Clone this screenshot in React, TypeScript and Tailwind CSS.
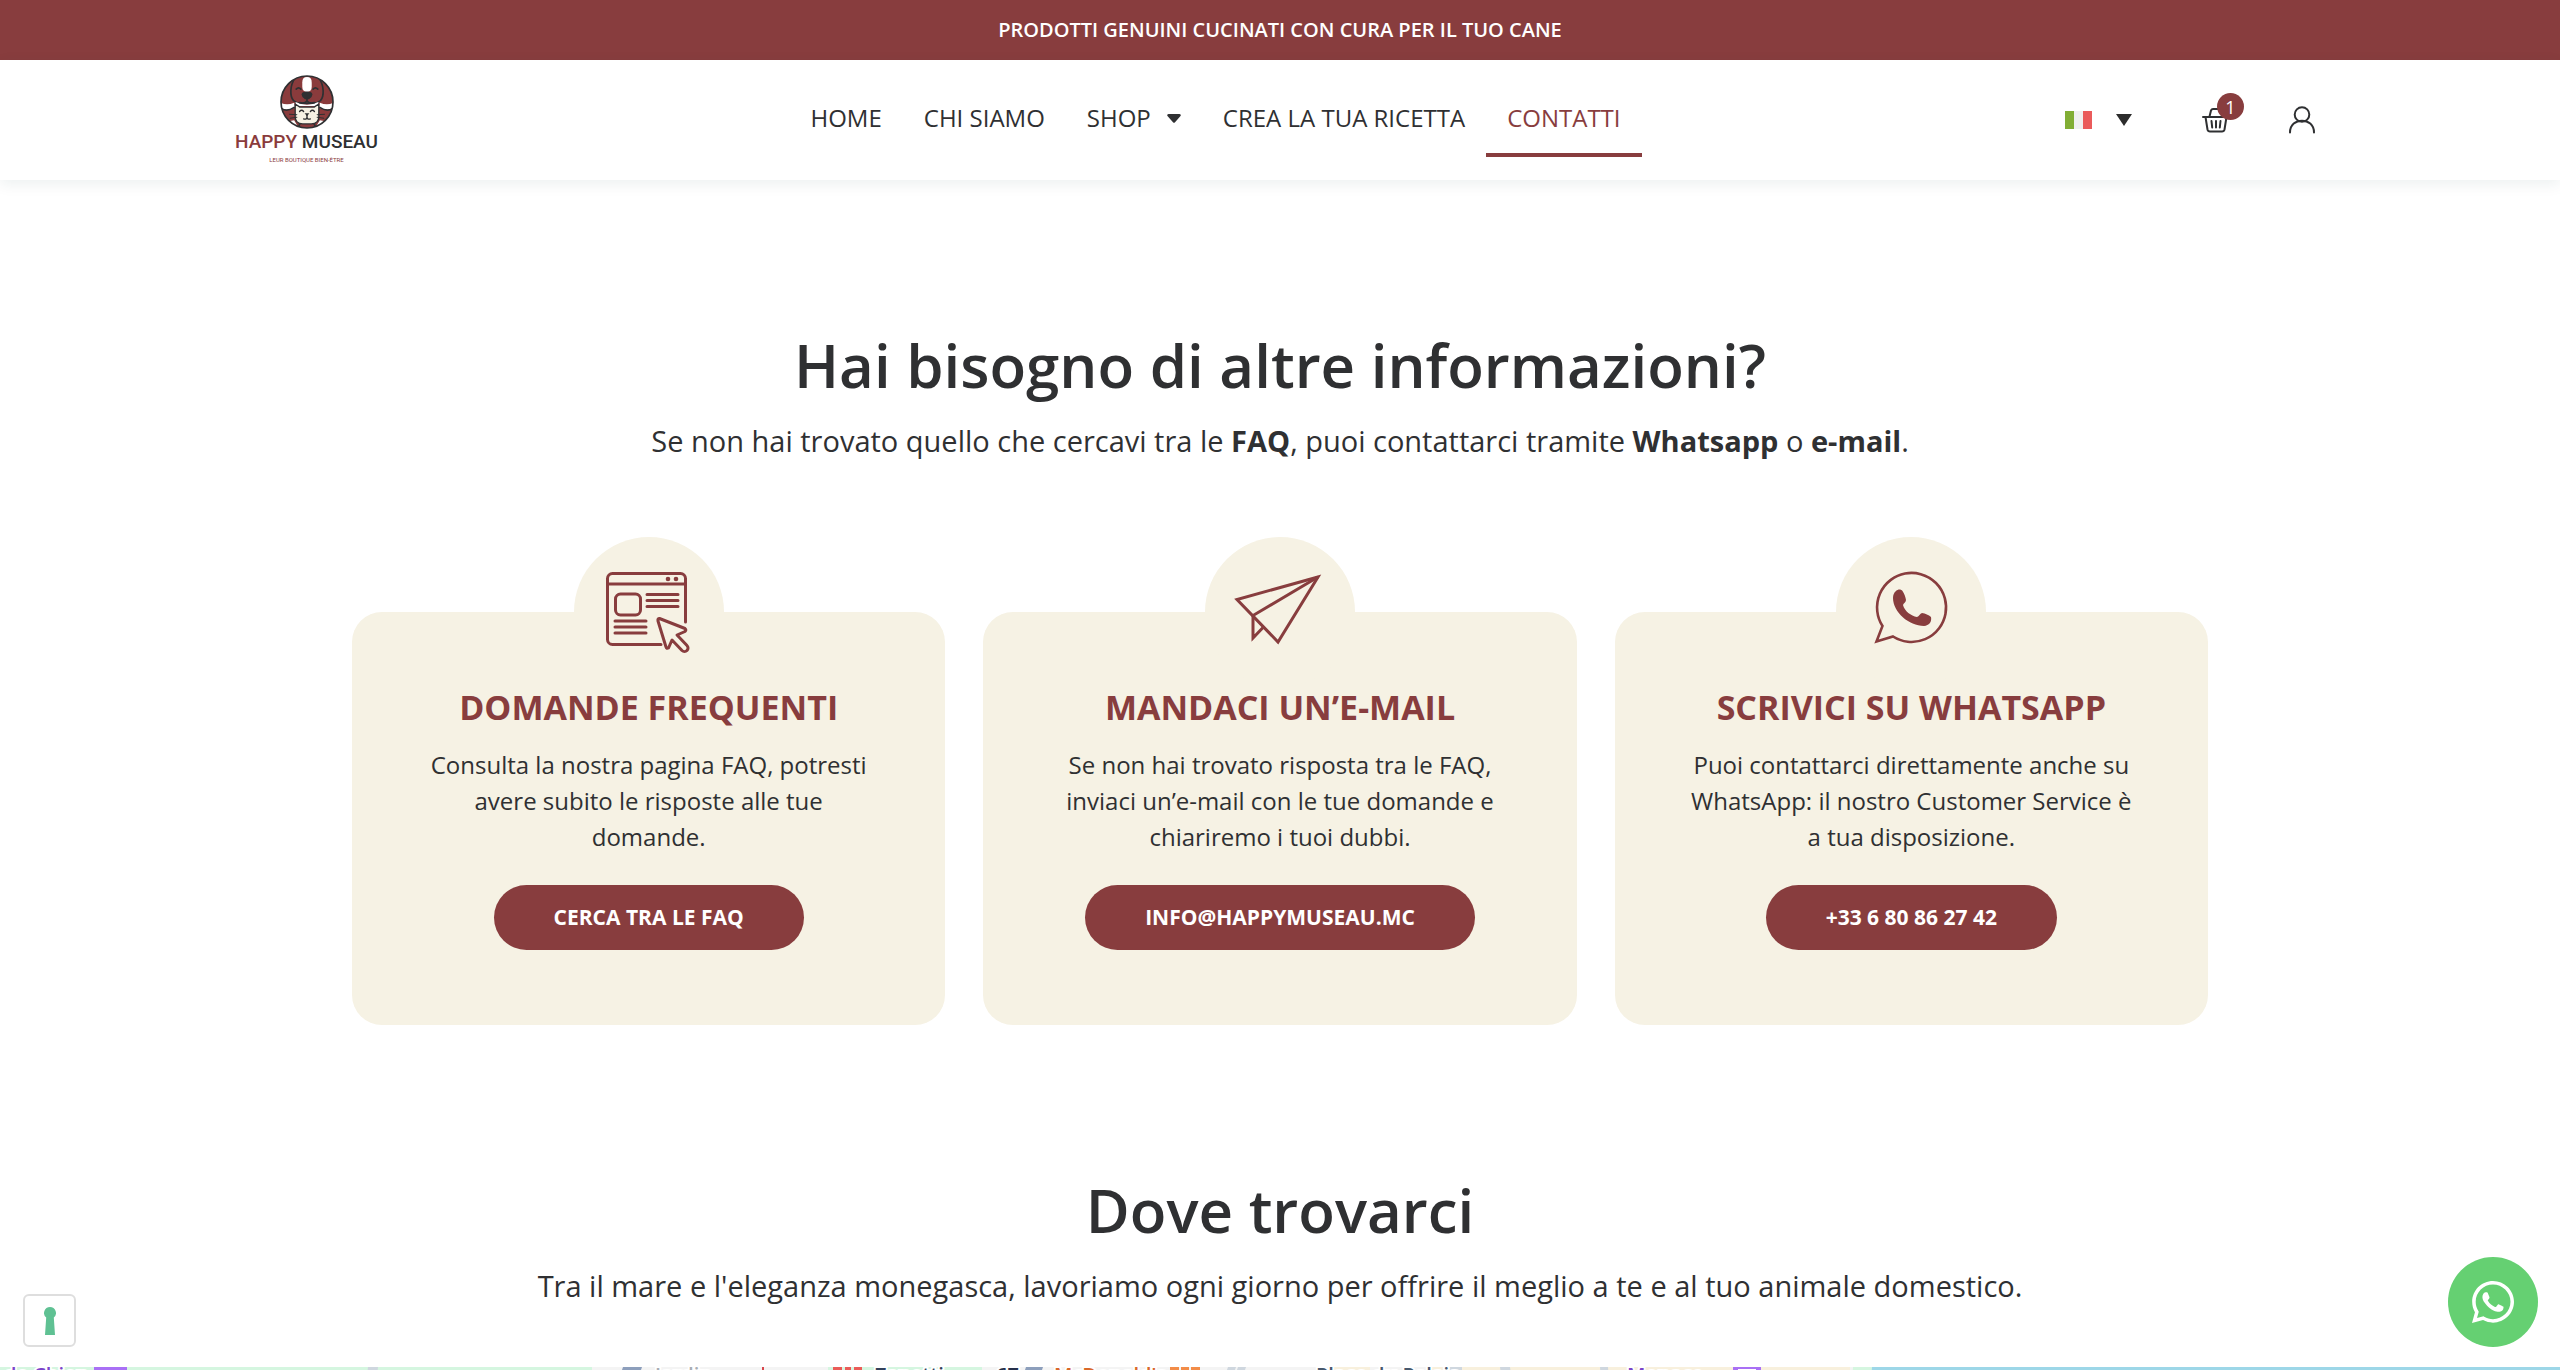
import React from "react";
import { FaWhatsapp } from "react-icons/fa";

const navItems = [
  { label: "HOME", href: "#home" },
  { label: "CHI SIAMO", href: "#chi-siamo" },
  { label: "SHOP", href: "#shop", hasMenu: true },
  { label: "CREA LA TUA RICETTA", href: "#ricetta" },
  { label: "CONTATTI", href: "#contatti", active: true },
];

const LogoMark = () => (
  <svg viewBox="0 0 160 160" className="size-[54px]" aria-hidden="true">
    <defs>
      <clipPath id="mark">
        <circle cx="80" cy="80" r="77" />
      </clipPath>
    </defs>
    <circle cx="80" cy="80" r="77" fill="#8a3b3c" />
    <g clipPath="url(#mark)" stroke="#2f3032" strokeWidth="5" strokeLinecap="round" strokeLinejoin="round">
      <path d="M-2 80q20 12 44 2l2 14q-14 10-30 6q-10-3-18-16z" fill="#fff" stroke="none" />
      <path d="M162 80q-20 12-44 2l-2 14q14 10 30 6q10-3 18-16z" fill="#fff" stroke="none" />
      <path d="M4 100q18 10 38-4M156 100q-18 10-38-4" fill="none" />
      <path d="M22 138l20-4 14 24-22 4zM138 138l-20-4-14 24 22 4z" fill="#fff" stroke="none" />
      <path d="M60 142h40l8 20H52z" fill="#8a3b3c" />
      <path d="M44 10C30 30 28 62 40 76q12 10 26 8h28q14 2 26-8c12-14 10-46-4-66" fill="#8a3b3c" />
      <path d="M46 80q34 16 68 0l-2 12H48z" fill="#fff" stroke="none" />
      <path d="M66 22q0-16 14-16t14 16v12q0 16-14 16T66 34z" fill="#fff" stroke="none" />
      <path d="M48 42q7-8 14 0M98 42q7-8 14 0" fill="none" />
      <path d="M64 58q0-9 16-9t16 9q0 8-10 14h-12q-10-6-10-14z" fill="#2f3032" stroke="none" />
      <path d="M80 70v8M58 82q16 4 22-5q6 9 22 5" fill="none" />
      <path d="M45 86l14 9h42l14-9v38q0 20-22 21H67q-22-1-22-21z" fill="#f6f2e4" strokeWidth="4" />
      <path d="M58 108q6-7 12 0M90 108q6-7 12 0M80 118v8M70 130q8 3 10-4q2 7 10 4" fill="none" strokeWidth="4" />
      <path d="M73 113h14l-7 9z" fill="#2f3032" stroke="none" />
      <path d="M28 116l22 2M30 128l20-3M132 116l-22 2M130 128l-20-3" fill="none" strokeWidth="3" />
    </g>
    <circle cx="80" cy="80" r="77" fill="none" stroke="#2f3032" strokeWidth="5" />
  </svg>
);

const BrowserIcon = () => (
  <svg viewBox="1 0 84 80" className="h-20 w-[84px] overflow-visible" fill="none" stroke="currentColor" strokeWidth="3" strokeLinecap="round" strokeLinejoin="round">
    <path d="M79.500 50V6.500a5 5 0 0 0-5-5h-68a5 5 0 0 0-5 5v61a5 5 0 0 0 5 5H55" />
    <path d="M1.500 12h78" />
    <g fill="currentColor" stroke="none">
      <circle cx="62" cy="7" r="2.300" />
      <circle cx="70" cy="7" r="2.300" />
    </g>
    <rect x="9.500" y="22" width="25" height="21" rx="5" />
    <path d="M41 22.500h31M41 28.500h31M41 34.500h31M9 49h31M9 55h31M9 61h31" />
    <path d="M53.500 46.500l25.500 10q1.500 1.500 0 3l-8 3.500 10 10.500a3.500 3.500 0 0 1-5 5l-10-10.500-3.500 8q-2 1-2.500-1l-8-26q-.5-2.500 1.500-2.500z" />
  </svg>
);

const PlaneIcon = () => (
  <svg viewBox="3 1 84 80" className="h-20 w-[84px] overflow-visible" fill="none" stroke="currentColor" strokeWidth="3" strokeLinejoin="miter">
    <path d="M83 6L2 28.500 43 71z" />
    <path d="M83 6L18 44.500V67l11-11.500" />
  </svg>
);

const ChatIcon = () => (
  <svg viewBox="-5 1 84 80" className="h-20 w-[84px] overflow-visible">
    <path d="M8.500 55A34.500 34.500 0 1 1 19 65.500L2.500 70.500z" fill="none" stroke="currentColor" strokeWidth="2.600" />
    <path
      d="M22 20c2-2 5-2 6.500 0 2 3 3 6 3.500 9 0 2-2.500 3.500-3 5 1.500 6 8 11 14 12 2-.5 3-3.500 5-4 3.500.5 6.500 2 9 4 1 5-2 8.500-7 9-15 0-31-14-31-28 0-3 1-5.500 3-7z"
      fill="currentColor"
    />
  </svg>
);

const cards = [
  {
    icon: <BrowserIcon />,
    title: "DOMANDE FREQUENTI",
    text: "Consulta la nostra pagina FAQ, potresti avere subito le risposte alle tue domande.",
    action: "CERCA TRA LE FAQ",
    href: "#faq",
  },
  {
    icon: <PlaneIcon />,
    title: "MANDACI UN’E-MAIL",
    text: "Se non hai trovato risposta tra le FAQ, inviaci un’e-mail con le tue domande e chiariremo i tuoi dubbi.",
    action: "INFO@HAPPYMUSEAU.MC",
    href: "mailto:info@happymuseau.mc",
  },
  {
    icon: <ChatIcon />,
    title: "SCRIVICI SU WHATSAPP",
    text: "Puoi contattarci direttamente anche su WhatsApp: il nostro Customer Service è a tua disposizione.",
    action: "+33 6 80 86 27 42",
    href: "tel:+33680862742",
  },
];

const Header = () => (
  <header className="flex h-[120px] items-center justify-between bg-white pl-[235px] pr-[244px] shadow-[0_4px_14px_rgba(0,60,60,0.08)]">
    <a href="#home" className="flex flex-col items-center font-[Roboto,sans-serif]">
      <LogoMark />
      <span className="text-[19px] leading-[26px] font-medium text-[#2f3032]">
        <span className="text-[#8a3b3c]">HAPPY</span> MUSEAU
      </span>
      <span className="text-[6px] leading-[10px] text-[#8a3b3c]">LEUR BOUTIQUE BIEN-ÊTRE</span>
    </a>

    <nav className="mr-3 flex text-[24px] leading-[30px]">
      {navItems.map((item) => (
        <a
          key={item.label}
          href={item.href}
          className={
            item.active
              ? "flex items-center border-b-4 border-[#883d3e] px-[21px] py-5 text-[#883d3e]"
              : "flex items-center border-b-4 border-transparent px-[21px] py-5"
          }
        >
          {item.label}
          {item.hasMenu && (
            <svg viewBox="0 0 14 9" className="ml-4 h-[9px] w-[14px]" fill="currentColor">
              <path d="M1.500 0h11q2 .5 1 2L8 8.300q-1 1-2 0L.5 2q-1-1.500 1-2z" />
            </svg>
          )}
        </a>
      ))}
    </nav>

    <div className="flex items-center">
      <label className="relative flex items-center gap-6">
        <svg viewBox="0 0 27 18" className="h-[18px] w-[27px]">
          <path d="M0 0h9v18H0z" fill="#82ae35" />
          <path d="M9 0h9v18H9z" fill="#f0f0f0" />
          <path d="M18 0h9v18h-9z" fill="#ea5b5b" />
        </svg>
        <svg viewBox="0 0 16 12" className="h-3 w-4" fill="#2c2c2c">
          <path d="M0 0h16L8 12z" />
        </svg>
        <select aria-label="Lingua" className="absolute inset-0 w-full opacity-0">
          <option>IT</option>
          <option>FR</option>
          <option>EN</option>
        </select>
      </label>
      <button aria-label="Carrello" className="relative ml-[70px]">
        <svg viewBox="0 0 28 28" className="size-7" fill="none" stroke="#2f3032" strokeWidth="2" strokeLinecap="round" strokeLinejoin="round">
          <path d="M1 11h26M3.500 11l2 12.500q.5 2 2.500 2h12q2 0 2.500-2l2-12.500M7.500 10.500l1.500-6q.7-1.500 2-1.500h6q1.300 0 2 1.500l1.500 6M9.500 15l.7 6.500M14 15v6.500M18.500 15l-.7 6.500" />
        </svg>
        <span className="absolute -top-[13px] left-[15px] flex size-[27px] items-center justify-center rounded-full bg-[#883d3e] text-[18px] leading-none text-white">
          1
        </span>
      </button>
      <button aria-label="Account" className="ml-[58px]">
        <svg viewBox="0 0 28 28" className="size-7" fill="none" stroke="#2f3032" strokeWidth="2" strokeLinecap="round">
          <circle cx="14" cy="8.500" r="7.300" />
          <path d="M2 26.500C2 10.700 26 10.700 26 26.500" />
        </svg>
      </button>
    </div>
  </header>
);

const CityMap = () => (
  <svg className="h-[600px] w-full" preserveAspectRatio="xMinYMin slice" viewBox="0 0 2560 600" fontWeight="600" fontSize="20">
    <path d="M0 0h2560v600H0z" fill="#f4f4f4" />
    <path d="M0 0h592v600H0zM828 0h154v600H828z" fill="#d5f6e0" />
    <path d="M1333 0h37v600h-37zM1430 0h420v600h-420z" fill="#f8f0dd" />
    <path d="M1853 0h707v600H1820z" fill="#d5f6e0" />
    <path d="M1872 0h688v600H1840z" fill="#9dd7e8" />
    <path d="M368 0h10l-60 600h-10zM1228 0h8L1036 600h-8zM1238 0h8l-200 600h-8zM1450 0h12v600h-12zM1500 0h10l80 600h-10zM1600 0h8l40 600h-8z" fill="#cfd7df" />
    <path d="M623 0h19L442 600h-19zM1026 0h17L843 600h-17z" fill="#8d9fbc" />
    <path d="M762 0h2v600h-2z" fill="#d8474c" />
    <g stroke="#fff" strokeWidth="4" paintOrder="stroke">
      <text x="4" y="15" fill="#7b45c9">de Chien</text>
      <text x="655" y="15" fill="#a9adb3">Jardin</text>
      <text x="875" y="15" fill="#33415a">Zanetti</text>
      <text x="996" y="15" fill="#26304a">67</text>
      <text x="1054" y="15" fill="#d9682a">McDonald's</text>
      <text x="1316" y="15" fill="#47586d">Place du Palais</text>
      <text x="1627" y="15" fill="#7b45c9">Monaco</text>
    </g>
    <path d="M94 0h33v28H94zM1733 0h28v28h-28z" fill="#a970f5" />
    <path d="M102 3h8v2h-8zM114 3h6v2h-6zM1738 2h18v2h-18z" fill="#fff" />
    <path d="M833 0h9v28h-9zM845 0h6v28h-6zM854 0h8v28h-8z" fill="#ea5c58" />
    <path d="M1170 0h9v28h-9zM1181 0h8v28h-8zM1191 0h9v28h-9z" fill="#f28c48" />
  </svg>
);

export default function App() {
  return (
    <div className="bg-white font-['Open_Sans',sans-serif] text-[#2f3032]">
      <div className="flex h-[60px] items-center justify-center bg-[#883d3e] text-[20px] font-semibold text-white">
        PRODOTTI GENUINI CUCINATI CON CURA PER IL TUO CANE
      </div>
      <Header />

      <main className="text-center">
        <section className="px-[352px] pt-[147px]">
          <h1 className="text-[60px] leading-[76px] font-semibold">Hai bisogno di altre informazioni?</h1>
          <p className="mt-4 text-[29px] leading-[44px]">
            Se non hai trovato quello che cercavi tra le <b>FAQ</b>, puoi contattarci tramite <b>Whatsapp</b> o{" "}
            <b>e-mail</b>.
          </p>
          <div className="mt-[149px] grid grid-cols-3 gap-[38px]">
            {cards.map((card) => (
              <div key={card.title} className="relative flex flex-col items-center rounded-[30px] bg-[#f6f2e4] px-[72px] py-[75px]">
                <div className="absolute -top-[75px] flex size-[150px] justify-center rounded-full bg-[#f6f2e4] pt-[35px] text-[#883d3e]">
                  {card.icon}
                </div>
                <h2 className="relative text-[34px] leading-10 font-bold text-[#883d3e]">{card.title}</h2>
                <p className="mt-5 text-[24px] leading-9">{card.text}</p>
                <a href={card.href} className="mt-[30px] flex h-[65px] items-center rounded-full bg-[#883d3e] px-[60px] text-[21px] font-bold text-white">
                  {card.action}
                </a>
              </div>
            ))}
          </div>
        </section>

        <section className="pt-[147px]">
          <h2 className="text-[60px] leading-[76px] font-semibold">Dove trovarci</h2>
          <p className="mt-4 mb-[59px] text-[29px] leading-[44px]">
            Tra il mare e l'eleganza monegasca, lavoriamo ogni giorno per offrire il meglio a te e al tuo animale
            domestico.
          </p>
          <CityMap />
        </section>
      </main>

      <button aria-label="Preferenze privacy" className="fixed bottom-[23px] left-[23px] flex size-[53px] items-center justify-center rounded-md border-2 border-[#dedede] bg-white">
        <svg viewBox="0 0 12 28" className="h-7 w-3" fill="#5fc193">
          <path d="M6 0a6 6 0 0 1 3.800 10.600L11 28H1l1.200-17.400A6 6 0 0 1 6 0z" />
        </svg>
      </button>
      <a href="#whatsapp" aria-label="WhatsApp" className="fixed right-[22px] bottom-[23px] flex size-[90px] items-center justify-center rounded-full bg-[#65d072] text-white">
        <FaWhatsapp className="size-12" />
      </a>
    </div>
  );
}
